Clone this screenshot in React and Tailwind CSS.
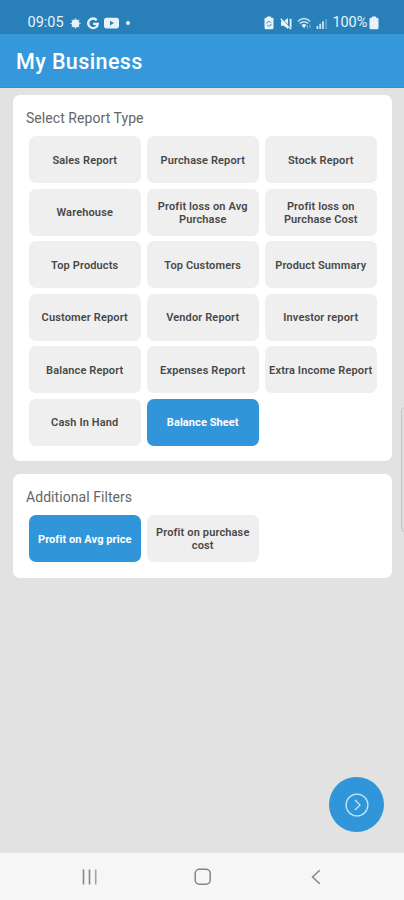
import clsx from "clsx";

const REPORTS = [
  "Sales Report",
  "Purchase Report",
  "Stock Report",
  "Warehouse",
  "Profit loss on Avg Purchase",
  "Profit loss on Purchase Cost",
  "Top Products",
  "Top Customers",
  "Product Summary",
  "Customer Report",
  "Vendor Report",
  "Investor report",
  "Balance Report",
  "Expenses Report",
  "Extra Income Report",
  "Cash In Hand",
  "Balance Sheet",
];

const FILTERS = ["Profit on Avg price", "Profit on purchase cost"];

function StatusBar() {
  return (
    <div className="flex h-[34px] shrink-0 items-center bg-[#2980b9] pt-[12px] pr-[25px] pl-[27.5px] text-[#e6f3fb]">
      <span className="w-[37px] text-[14.5px] leading-none whitespace-nowrap">09:05</span>
      <svg className="ml-[4.5px]" width="13" height="13" viewBox="0 0 13 13">
        <circle cx="6.5" cy="6.5" r="3.9" fill="currentColor" />
        <path d="M6.5 1v11M1 6.5h11M2.6 2.6l7.8 7.8M10.4 2.6l-7.8 7.8" stroke="currentColor" strokeWidth="1.2" opacity=".6" />
      </svg>
      <svg className="ml-[5px]" width="12" height="13" viewBox="0 0 12 13" fill="none" stroke="currentColor" strokeWidth="2.3">
        <path d="M9.7 3.2A4.8 4.8 0 1 0 10.8 6.8H6.2" />
      </svg>
      <svg className="ml-[5px]" width="15" height="12" viewBox="0 0 15 12">
        <rect y=".8" width="15" height="10.6" rx="2.6" fill="currentColor" />
        <path d="M6 3.7v4.8L10 6.1z" fill="#2980b9" />
      </svg>
      <span className="ml-[7px] size-[3.5px] rounded-full bg-[#e6f3fb]" />

      <svg className="ml-auto" width="10" height="14" viewBox="0 0 10 14">
        <path d="M3 .5h4v1.3h1.2q1.3 0 1.3 1.3v8.6q0 1.6-1.6 1.6H2.1q-1.6 0-1.6-1.6V3.1q0-1.3 1.3-1.3H3z" fill="currentColor" />
        <path d="M2.8 7.6a2.2 2.2 0 0 1 4.2-.8M7.2 7.8a2.2 2.2 0 0 1-4 1.3" fill="none" stroke="#2980b9" strokeWidth=".9" />
      </svg>
      <svg className="ml-[5.5px]" width="13" height="13" viewBox="0 0 13 13">
        <path d="M1 4.2h2.7L8 1v11L3.7 8.8H1z" fill="currentColor" />
        <path d="M10.6 1.8v9.8" stroke="currentColor" strokeWidth="1.8" />
        <path d="M1.6 1.2l9 9.4" stroke="#2980b9" strokeWidth="1" />
        <path d="M.7 1.7l10 10.4" stroke="currentColor" strokeWidth="1.3" />
      </svg>
      <svg className="ml-[4px]" width="15" height="13" viewBox="0 0 15 13">
        <path d="M.8 4.4Q7 -1.3 13.2 4.4M2.8 6.6Q7 2.8 11.2 6.6" fill="none" stroke="currentColor" strokeWidth="1.3" opacity=".85" />
        <path d="M4.5 8Q7 6 9.5 8L7 11.2z" fill="currentColor" />
        <path d="M10.5 8v3.7M13 7.5v3.7" stroke="currentColor" strokeWidth="1" opacity=".45" />
      </svg>
      <svg className="ml-[4px]" width="12" height="13" viewBox="0 0 12 13" fill="currentColor">
        <path d="M.5 9h1.8v3H.5zM3.3 6.7h1.8V12H3.3zM6.1 4.3h1.8V12H6.1z" opacity=".85" />
        <path d="M9.3 2h1.6v10H9.3z" opacity=".35" />
      </svg>
      <span className="ml-[5px] w-[35.5px] text-[14.5px] leading-none tracking-[-0.1px] whitespace-nowrap">100%</span>
      <svg className="ml-px" width="10" height="14" viewBox="0 0 10 14" fill="currentColor">
        <path d="M3 .5h4v1.3h1.2q1.3 0 1.3 1.3v8.6q0 1.6-1.6 1.6H2.1q-1.6 0-1.6-1.6V3.1q0-1.3 1.3-1.3H3z" />
      </svg>
    </div>
  );
}

function Tile({ label, active }) {
  return (
    <button
      className={clsx(
        "flex h-[47px] items-center justify-center rounded-[7px] px-[5px] pt-px text-center text-[11px] leading-[13px]",
        active
          ? "bg-[#3096d9] font-bold tracking-[0.08px] text-white"
          : "bg-[#efefef] font-semibold tracking-[0.14px] text-[#484848]"
      )}
    >
      <span className="-mx-1">{label}</span>
    </button>
  );
}

function Section({ title, items, selected, className }) {
  return (
    <section className={clsx("rounded-[7px] bg-white pr-[15px] pl-[15.5px]", className)}>
      <h2 className="-ml-[2.5px] text-[14px] leading-[18px] tracking-[0.06px] text-[#666]">{title}</h2>
      <div className="mt-[9px] grid grid-cols-3 gap-[5.5px]">
        {items.map((label) => (
          <Tile key={label} label={label} active={label === selected} />
        ))}
      </div>
    </section>
  );
}

function NavBar() {
  return (
    <nav className="flex h-[47px] shrink-0 items-center bg-[#f6f6f6] pl-[82px] text-[#858585]">
      <svg width="16" height="16" viewBox="0 0 16 16" fill="none" stroke="currentColor" strokeWidth="1.6">
        <path d="M1.5 .5v15M7.5 .5v15" />
        <path d="M13.7 .5v15" opacity=".75" />
      </svg>
      <svg className="ml-[96px]" width="18" height="18" viewBox="0 0 18 18" fill="none" stroke="currentColor" strokeWidth="1.5">
        <rect x="1.2" y="1.2" width="15" height="15" rx="4.2" />
      </svg>
      <svg className="ml-[99px]" width="10" height="16" viewBox="0 0 10 16" fill="none" stroke="currentColor" strokeWidth="1.5">
        <path d="M8.8 1.2L1.5 8l7.3 6.8" />
      </svg>
    </nav>
  );
}

export default function App() {
  return (
    <div className="relative flex h-[900px] w-[404px] flex-col overflow-hidden bg-[#e2e2e2] font-[Roboto,sans-serif]">
      <StatusBar />
      <header className="flex h-[54px] shrink-0 items-center border-b border-[#2693dc] bg-[#3498db] pt-[2px] pl-4">
        <h1 className="text-[21.5px] leading-none font-medium tracking-[0.4px] text-white">My Business</h1>
      </header>

      <main className="flex flex-1 flex-col gap-[13px] pt-[7px] pr-3 pl-[13px]">
        <Section title="Select Report Type" items={REPORTS} selected="Balance Sheet" className="h-[366px] pt-[14px]" />
        <Section title="Additional Filters" items={FILTERS} selected="Profit on Avg price" className="h-[104px] pt-[14px]" />
      </main>

      {/* edge panel handle */}
      <div className="absolute top-[407px] -right-[6px] h-[125px] w-[9px] rounded-[4px] border border-[#c4c4c4] bg-[#dedede]" />

      <button className="absolute right-5 bottom-[68px] flex size-[55px] items-center justify-center rounded-full bg-[#3096d9] text-[#c5e4f8]">
        <svg width="24" height="24" viewBox="0 0 24 24" fill="none" stroke="currentColor" strokeWidth="1.3">
          <circle cx="12" cy="12" r="10.9" />
          <path d="M10 7l5 5-5 5" />
        </svg>
      </button>

      <NavBar />
    </div>
  );
}
